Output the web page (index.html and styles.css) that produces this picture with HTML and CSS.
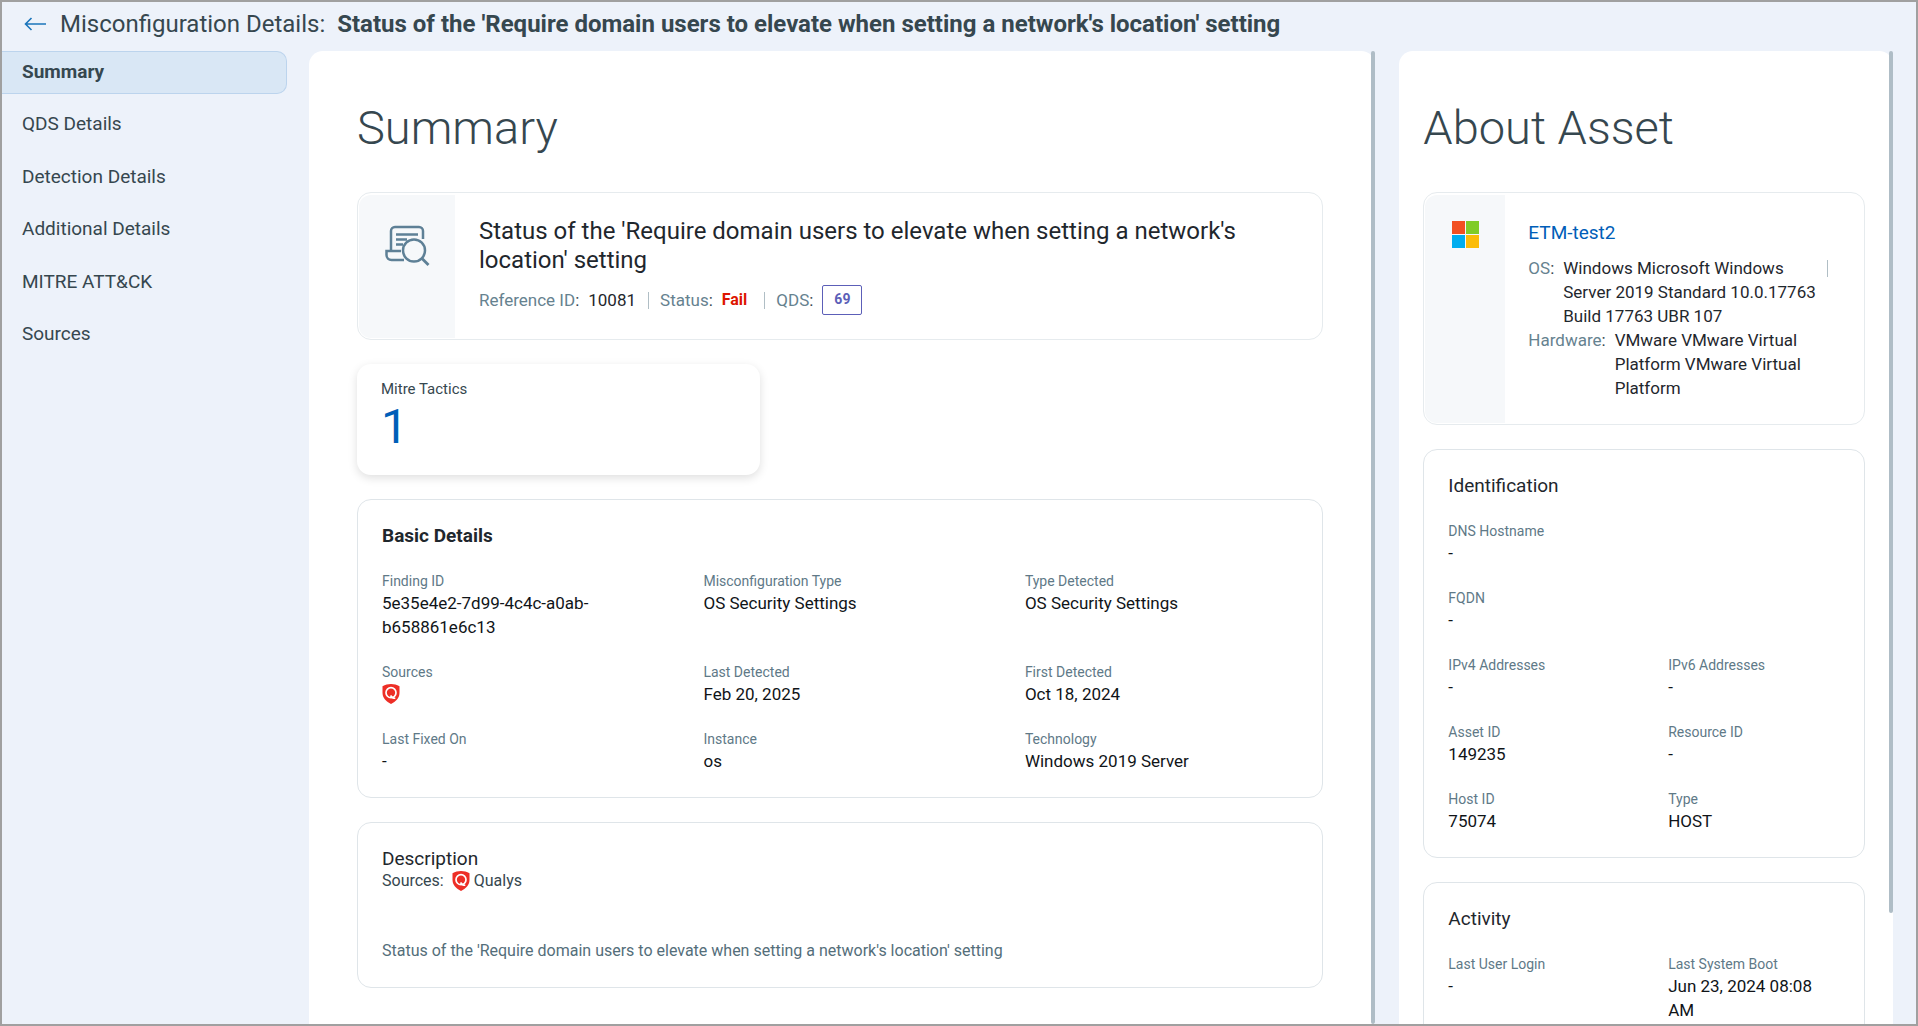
FILE: index.html
```html
<!DOCTYPE html>
<html lang="en">
<head>
<meta charset="utf-8">
<title>Misconfiguration Details</title>
<link rel="stylesheet" href="styles.css">
</head>
<body>
<svg class="sprite" aria-hidden="true">
  <symbol id="qualys" viewBox="0 0 18 20">
    <path d="M.5 2.200C3.200.7 6 0 9 0s5.800.7 8.500 2.200V9c0 5-3.800 8.700-8.500 11C4.300 17.700.5 14 .5 9z" fill="#ed2e26"/>
    <circle cx="9" cy="8.700" r="5" fill="none" stroke="#fff" stroke-width="1.700"/>
    <path d="M8.500 11.500c1.400 2.200 2.800 2.900 4.800 2.800" fill="none" stroke="#fff" stroke-width="1.600"/>
  </symbol>
</svg>
<div class="page">
  <header class="topbar">
    <a class="back" href="#" aria-label="Back">
      <svg width="22" height="14" viewBox="0 0 22 14" fill="none" stroke="#1b75bb" stroke-width="1.600"><path d="M22 7H2M7.500 1 1.500 7l6 6"/></svg>
    </a>
    <h1 class="topbar-title">Misconfiguration Details: <strong>Status of the 'Require domain users to elevate when setting a network's location' setting</strong></h1>
  </header>
  <div class="body">
    <nav class="nav">
      <a class="nav-item active" href="#" aria-current="page">Summary</a>
      <a class="nav-item" href="#">QDS Details</a>
      <a class="nav-item" href="#">Detection Details</a>
      <a class="nav-item" href="#">Additional Details</a>
      <a class="nav-item" href="#">MITRE ATT&amp;CK</a>
      <a class="nav-item" href="#">Sources</a>
    </nav>
    <div class="panels">
      <main class="panel">
        <div class="panel-scroll wide">
          <h2 class="panel-title">Summary</h2>
          <section class="card hero">
            <div class="hero-icon">
              <svg width="46" height="42" viewBox="0 0 46 42" fill="none" stroke="#5e8096" stroke-width="2.500">
                <path d="M7 25V6a4 4 0 0 1 4-4h24a4 4 0 0 1 4 4v8"/>
                <path d="M12 9.500h22M12 14.500h11M12 19.500h7" stroke-width="2.600"/>
                <path d="M17 26H2.500v4a5 5 0 0 0 5 5H20"/>
                <circle cx="30" cy="25.500" r="11"/>
                <path d="m38 33.500 6.500 6.500" stroke-width="2.800"/>
              </svg>
            </div>
            <div class="hero-body">
              <h3 class="hero-title">Status of the 'Require domain users to elevate when setting a network's location' setting</h3>
              <div class="facts">
                <span class="fact"><span class="key">Reference ID<i>:</i></span> 10081</span>
                <span class="fact"><span class="key">Status<i>:</i></span> <b class="fail">Fail</b></span>
                <span class="fact"><span class="key">QDS<i>:</i></span> <span class="score">69</span></span>
              </div>
            </div>
          </section>
          <section class="metric">
            <h3 class="metric-label">Mitre Tactics</h3>
            <a class="metric-value" href="#">1</a>
          </section>
          <section class="card">
            <h3 class="card-title strong">Basic Details</h3>
            <dl class="fields three">
              <div><dt>Finding ID</dt><dd>5e35e4e2-7d99-4c4c-a0ab-b658861e6c13</dd></div>
              <div><dt>Misconfiguration Type</dt><dd>OS Security Settings</dd></div>
              <div><dt>Type Detected</dt><dd>OS Security Settings</dd></div>
              <div><dt>Sources</dt><dd class="with-icon"><svg class="shield" role="img" aria-label="Qualys"><use href="#qualys"/></svg></dd></div>
              <div><dt>Last Detected</dt><dd>Feb 20, 2025</dd></div>
              <div><dt>First Detected</dt><dd>Oct 18, 2024</dd></div>
              <div><dt>Last Fixed On</dt><dd>-</dd></div>
              <div><dt>Instance</dt><dd>os</dd></div>
              <div><dt>Technology</dt><dd>Windows 2019 Server</dd></div>
            </dl>
          </section>
          <section class="card">
            <h3 class="card-title">Description</h3>
            <p class="sources">Sources: <svg class="shield" aria-hidden="true"><use href="#qualys"/></svg> Qualys</p>
            <p class="description">Status of the 'Require domain users to elevate when setting a network's location' setting</p>
          </section>
        </div>
        <div class="thumb full"></div>
      </main>
      <aside class="panel">
        <div class="panel-scroll">
          <h2 class="panel-title">About Asset</h2>
          <section class="card hero asset">
            <div class="hero-icon">
              <svg width="27" height="27" viewBox="0 0 27 27"><path fill="#f25022" d="M0 0h13v13H0z"/><path fill="#80cc28" d="M14 0h13v13H14z"/><path fill="#00adef" d="M0 14h13v13H0z"/><path fill="#fbbc09" d="M14 14h13v13H14z"/></svg>
            </div>
            <div class="hero-body">
              <a class="asset-name" href="#">ETM-test2</a>
              <div class="asset-fact divided"><span class="key">OS<i>:</i></span><span>Windows Microsoft Windows Server 2019 Standard 10.0.17763 Build 17763 UBR 107</span></div>
              <div class="asset-fact"><span class="key">Hardware<i>:</i></span><span>VMware VMware Virtual Platform VMware Virtual Platform</span></div>
            </div>
          </section>
          <section class="card">
            <h3 class="card-title">Identification</h3>
            <dl class="fields two">
              <div class="row"><dt>DNS Hostname</dt><dd>-</dd></div>
              <div class="row"><dt>FQDN</dt><dd>-</dd></div>
              <div><dt>IPv4 Addresses</dt><dd>-</dd></div>
              <div><dt>IPv6 Addresses</dt><dd>-</dd></div>
              <div><dt>Asset ID</dt><dd>149235</dd></div>
              <div><dt>Resource ID</dt><dd>-</dd></div>
              <div><dt>Host ID</dt><dd>75074</dd></div>
              <div><dt>Type</dt><dd>HOST</dd></div>
            </dl>
          </section>
          <section class="card">
            <h3 class="card-title">Activity</h3>
            <dl class="fields two">
              <div><dt>Last User Login</dt><dd>-</dd></div>
              <div><dt>Last System Boot</dt><dd>Jun 23, 2024 08:08 AM</dd></div>
            </dl>
          </section>
        </div>
        <div class="thumb"></div>
      </aside>
    </div>
  </div>
</div>
</body>
</html>
```
FILE: styles.css
```css
* { box-sizing: border-box; }
body {
  margin: 0;
  font: 17px/24px Roboto, "Liberation Sans", sans-serif;
  color: #1f272d;
}
h1, h2, h3, p, dl, dd { margin: 0; font-weight: 400; }
a { text-decoration: none; }
i { font-style: normal; }
svg { display: block; }
.sprite { display: none; }

.page {
  display: flex;
  flex-direction: column;
  height: 100vh;
  border: 2px solid #a0a0a0;
  background: #edf2fa;
}
.topbar {
  display: flex;
  align-items: center;
  gap: 14px;
  height: 49px;
  padding: 0 22px 6px;
  flex: none;
}
.topbar-title { font-size: 24px; line-height: 32px; color: #36474f; white-space: nowrap; }
.topbar-title strong { margin-left: 6px; font-weight: 700; }

.body { display: flex; flex: 1; min-height: 0; }
.nav {
  display: flex;
  flex-direction: column;
  justify-content: space-between;
  flex: none;
  width: 285px;
  height: 305px;
  margin-right: 22px;
}
.nav-item {
  height: 43px;
  padding: 0 20px;
  border: 1px solid transparent;
  border-left: 0;
  border-radius: 0 10px 10px 0;
  font-size: 19px;
  line-height: 39px;
  color: #36474f;
}
.nav-item.active { background: #d9e7f5; border-color: #bcd4ed; font-weight: 700; }

.panels {
  display: grid;
  grid-template-columns: minmax(0, 54fr) minmax(0, 25fr);
  gap: 24px;
  flex: 1;
  min-width: 0;
  padding-right: 23px;
}
.panel {
  position: relative;
  min-height: 0;
  border-radius: 14px 14px 0 0;
  background: #fff;
}
.panel-scroll {
  height: 100%;
  padding: 49px 28px 36px 24px;
  overflow-y: auto;
  scrollbar-width: none;
}
.panel-scroll.wide { padding: 49px 52px 36px 48px; }
.thumb {
  position: absolute;
  top: 0;
  right: 0;
  width: 4px;
  height: 88.6%;
  border-radius: 2px;
  background: #afbdc6;
}
.thumb.full { height: 100%; }
.panel-title { margin-bottom: 36px; font-size: 47px; line-height: 56px; font-weight: 300; color: #36474f; }

.card {
  margin-bottom: 24px;
  padding: 24px 0;
  border: 1px solid #dfe5e9;
  border-radius: 14px;
  background: #fff;
}
.hero { display: flex; padding: 2px 0 1px 1px; border-color: #e6ebee; }
.hero-icon {
  display: flex;
  justify-content: center;
  flex: none;
  width: 96px;
  padding-top: 30px;
  border-radius: 12px 0 0 12px;
  background: #f6f8fa;
}
.hero-body { flex: 1; min-width: 0; padding: 22px 24px 23px; }
.hero-title { font-size: 24px; line-height: 29px; }
.facts { display: flex; align-items: center; margin-top: 10px; }
.fact { display: flex; align-items: center; gap: 9px; }
.fact + .fact { margin-left: 12px; padding-left: 12px; background: linear-gradient(#b0bec5, #b0bec5) 0 center / 1px 17px no-repeat; }
.key { color: #66828f; }
.key i { color: #36474f; }
.fail { color: #dd1500; font-size: 16px; font-weight: 700; margin-right: 5px; }
.score {
  width: 40px;
  height: 30px;
  border: 1px solid #5c5fb8;
  border-radius: 2px;
  font-size: 14px;
  line-height: 27px;
  font-weight: 700;
  text-align: center;
  color: #5c5fb8;
}

.metric {
  width: calc(100% * 5 / 12);
  min-height: 111px;
  margin-bottom: 24px;
  padding: 14px 24px;
  border-radius: 14px;
  box-shadow: 0 3px 10px rgba(0, 0, 0, .13);
}
.metric-label { font-size: 15px; line-height: 22px; color: #36474f; }
.metric-value { display: block; font-size: 48px; line-height: 54px; color: #005eb8; }

.card-title { padding: 0 24px; font-size: 19px; line-height: 24px; }
.card-title.strong { font-weight: 700; }
.fields { display: grid; row-gap: 23px; margin-top: 23px; }
.fields.three { grid-template-columns: repeat(3, minmax(0, 1fr)); }
.fields.two { grid-template-columns: repeat(2, minmax(0, 1fr)); }
.fields > div { padding: 0 24px; }
.fields .row { grid-column: 1 / -1; }
dt { font-size: 14px; line-height: 20px; color: #607987; }
dd { min-height: 24px; color: #101418; }
.with-icon { display: flex; align-items: center; }
.shield { width: 18px; height: 20px; }
.sources { display: flex; align-items: center; gap: 4px; padding: 0 24px; font-size: 16px; line-height: 20px; color: #36474f; }
.sources .shield { margin-left: 4px; }
.description { margin-top: 49px; padding: 0 24px 1px; font-size: 16px; line-height: 22px; color: #546e7a; }

.asset .hero-icon { width: 80px; padding-top: 26px; }
.asset .hero-body { padding: 26px 48px 23px 23px; }
.asset-name { display: block; margin-bottom: 11px; font-size: 19px; color: #005eb8; }
.asset-fact { display: flex; gap: 9px; }
.asset-fact.divided { margin-right: -12px; padding-right: 12px; background: linear-gradient(#b0bec5, #b0bec5) right 4px / 1px 17px no-repeat; }
```
